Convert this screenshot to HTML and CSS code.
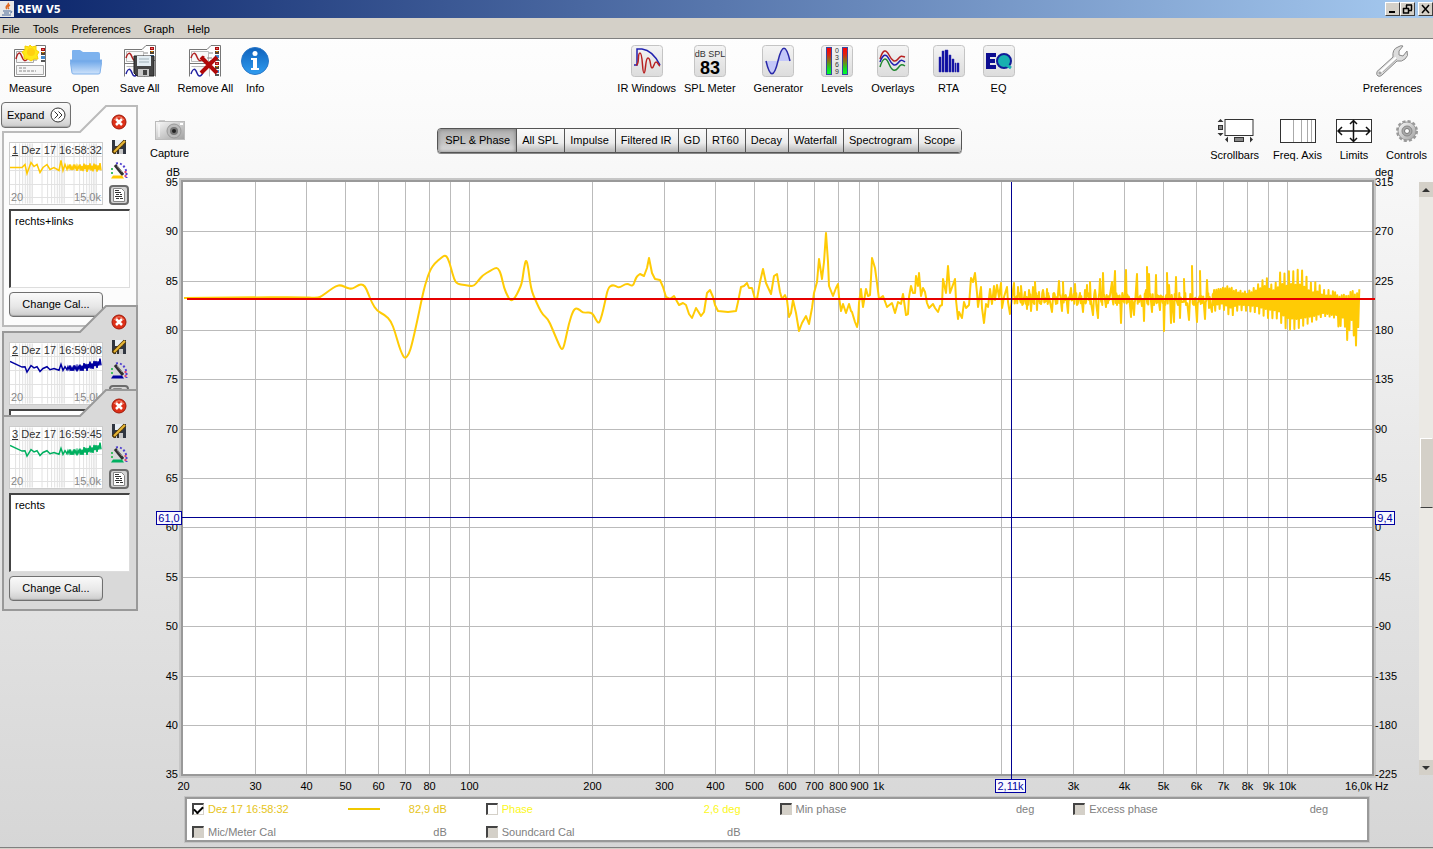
FILE: index.html
```html
<!DOCTYPE html>
<html lang="en">
<head>
	<title>REW V5</title>
	<meta charset="UTF-8">
	<link rel="stylesheet" href="styles.css">
</head>
<body>
	<!-- shared icon shapes -->
	<svg class="defs" width="0" height="0" aria-hidden="true">
		<defs>
			<linearGradient id="tile" x1="0" y1="0" x2="0" y2="1">
				<stop offset="0" stop-color="#f4f4f4"/><stop offset="1" stop-color="#dcdcdc"/>
			</linearGradient>
			<linearGradient id="level" x1="0" y1="0" x2="0" y2="1">
				<stop offset="0" stop-color="#f00"/><stop offset="0.25" stop-color="#e02010"/><stop offset="0.8" stop-color="#10e020"/><stop offset="1" stop-color="#0f3"/>
			</linearGradient>
			<linearGradient id="folder" x1="0" y1="0" x2="0" y2="1">
				<stop offset="0" stop-color="#6aa4e8"/><stop offset="1" stop-color="#cfe3fb"/>
			</linearGradient>
			<linearGradient id="blue" x1="0" y1="0" x2="0" y2="1">
				<stop offset="0" stop-color="#0f62bc"/><stop offset="1" stop-color="#2f9cf0"/>
			</linearGradient>
			<linearGradient id="metal" x1="0" y1="0" x2="1" y2="1">
				<stop offset="0" stop-color="#fafafa"/><stop offset="1" stop-color="#a0a0a0"/>
			</linearGradient>
			<symbol id="i-tile" viewBox="0 0 32 32">
				<rect x="0.5" y="0.5" width="31" height="31" rx="3" fill="url(#tile)" stroke="#c4c4c4"/>
			</symbol>
			<symbol id="i-marks" viewBox="0 0 4 14">
				<rect x="0.5" y="0.5" width="3" height="2" fill="#e66" stroke="#a11"/>
				<rect x="0" y="4" width="4" height="3" fill="#543"/><rect x="1" y="4" width="2" height="1" fill="#d80"/>
				<rect x="0" y="8" width="4" height="3" fill="#48c"/>
				<rect x="0.5" y="12.5" width="3" height="1" fill="#fff" stroke="#555"/>
			</symbol>
			<symbol id="i-stack" viewBox="0 0 32 32">
				<path d="M0.5 31.5V4.5H18L22 0.5H31.5V31.5" fill="#fff" stroke="#777"/>
				<path d="M2.5 6.5H19.5V16.5H2.5zM2.5 21.5H20.5V31.5" fill="#f8f8f8" stroke="#bbb"/>
				<path d="M2 13c2-6 4-6 6-1s4 5 7-1" fill="none" stroke="#b02020" stroke-width="1.5"/>
				<path d="M0.5 18.5H18L22 15.5H31.5" fill="none" stroke="#777"/>
				<path d="M2 29c2-6 4-6 6-1s4 3 6 0" fill="none" stroke="#2020a0" stroke-width="1.5"/>
				<path d="M20 8h4M18 13h5" stroke="#888"/>
				<use href="#i-marks" x="26" y="2" width="4" height="14"/>
				<use href="#i-marks" x="26" y="17" width="4" height="14"/>
			</symbol>
			<symbol id="i-close" viewBox="0 0 16 16">
				<circle cx="8" cy="8" r="7" fill="#dd3018" stroke="#a01808"/>
				<path d="M3 6a5.500 5.500 0 0 1 10 0" fill="none" stroke="#f08870"/>
				<path d="M5 5l6 6M11 5l-6 6" stroke="#fff" stroke-width="2.500"/>
			</symbol>
			<symbol id="i-save" viewBox="0 0 16 16">
				<path d="M1 1h14v14H3l-2-2z" fill="#303640"/>
				<rect x="4" y="1" width="8" height="6" fill="#e8eef4"/>
				<rect x="5" y="10" width="7" height="5" fill="#c8c8c8"/><rect x="6" y="11" width="2" height="4" fill="#333"/>
				<path d="M2 14L14 2" stroke="#5a3c00" stroke-width="3.500"/>
				<path d="M3 13L14 2" stroke="#e8b838" stroke-width="2"/>
			</symbol>
			<symbol id="i-pen" viewBox="0 0 18 18">
				<path d="M6 1.500C11 0 16 5 16.500 11v5" fill="none" stroke="#5040d0" stroke-width="2" stroke-dasharray="2 2"/>
				<path d="M15.500 9v7" stroke="#e04070" stroke-width="2" stroke-dasharray="2 2"/>
				<path d="M2 6v6" stroke="#40c060" stroke-width="2" stroke-dasharray="2 2"/>
				<path d="M5 3l8 10" stroke="#303030" stroke-width="3"/>
				<path d="M7 4l5 6" stroke="#888"/>
				<path d="M1 16.500L3 13.500H12L14 16.500z" fill="currentColor"/>
			</symbol>
			<symbol id="i-note" viewBox="0 0 20 20">
				<rect x="1" y="1" width="18" height="18" rx="3" fill="#d4d4d4" stroke="#6c6c6c" stroke-width="2"/>
				<path d="M4.500 3.500h8l3 3v10h-11z" fill="#fff" stroke="#888"/>
				<path d="M6 5.500h4M6 7.500h6M7 9.500h3M11 9.500h2M6 11.500h7M7 13.500h3M11 13.500h3" fill="none" stroke="#333"/>
			</symbol>
		</defs>
	</svg>

	<header class="titlebar">
		<svg class="java" width="14" height="16" viewBox="0 0 14 16"><rect width="14" height="16" fill="#e8e8e8"/><path d="M8 2c2 2-4 3-1 6M10 4c-2 1-3 2-1 4" fill="none" stroke="#e06820" stroke-width="1.500"/><path d="M3 10h7M4 12h5M2 14h9M10 10c3 0 2 2 0 2" fill="none" stroke="#4a6898"/></svg>
		<h1>REW V5</h1>
		<div class="window-buttons">
			<button aria-label="Minimize"><svg width="11" height="10"><path d="M2 8h6" stroke="#000" stroke-width="2"/></svg></button>
			<button aria-label="Restore"><svg width="11" height="10"><path d="M4 1h6M4.500 1v3M9.500 1v5M7 6.500h3M1 4.500h6M1.500 4v5.500M6.500 4v5.500M1 9h6" fill="none" stroke="#000" stroke-width="1.500"/></svg></button>
			<button class="quit" aria-label="Close"><svg width="11" height="10"><path d="M2 1l7 8M9 1l-7 8" stroke="#000" stroke-width="1.500"/></svg></button>
		</div>
	</header>

	<nav class="menubar">
		<button>File</button>
		<button>Tools</button>
		<button>Preferences</button>
		<button>Graph</button>
		<button>Help</button>
	</nav>

	<div class="toolbar">
		<div class="tool-group">
			<button class="tool">
				<svg width="32" height="32" viewBox="0 0 32 32">
					<path d="M0.500 31.500V4.500H18L22 0.500H31.500V31.500z" fill="#fff" stroke="#777"/>
					<path d="M2.500 6.500H19.500V17.500H2.500zM2.500 20.500H29.500V29.500H2.500z" fill="#f6f6f6" stroke="#aaa"/>
					<path d="M2 14c2-8 4-7 6-2s4 5 7-1" fill="none" stroke="#b02020" stroke-width="1.500"/>
					<path d="M5 23h7M5 26h17M20 15h4" stroke="#888" stroke-dasharray="3 1"/>
					<use href="#i-marks" x="27" y="3" width="4" height="14"/>
					<path d="M16 0l2 2 4-1 0 4 3 2-2 3 1 4-4 0-3 2-3-2-4 0 0-4-2-3 3-2 0-4 4 1z" fill="#ffe818" stroke="#f8d000"/>
					<circle cx="17" cy="7" r="4" fill="#ffd010"/>
				</svg>
				<span>Measure</span>
			</button>
			<button class="tool">
				<svg width="32" height="32" viewBox="0 0 32 32">
					<path d="M2 26V6q0-1 1-1h7l3 2h15q2 0 2 2v16z" fill="#7db2ee"/>
					<path d="M0 15h32l-2 13q0 1-2 1H4q-2 0-2-1z" fill="url(#folder)" stroke="#7fb0ea"/>
				</svg>
				<span>Open</span>
			</button>
			<button class="tool">
				<svg width="32" height="32" viewBox="0 0 32 32">
					<use href="#i-stack" width="32" height="32"/>
					<path d="M10 11h20v20H13l-3-3z" fill="#454545" stroke="#222"/>
					<rect x="13" y="11" width="14" height="10" fill="#e4eef4"/><path d="M15 14h10M15 17h10" stroke="#a0b0b8"/>
					<rect x="14" y="24" width="11" height="7" fill="#c8c8c8"/><rect x="19" y="25" width="4" height="5" fill="#444"/>
				</svg>
				<span>Save All</span>
			</button>
			<button class="tool tight">
				<svg width="32" height="32" viewBox="0 0 32 32">
					<use href="#i-stack" width="32" height="32"/>
					<path d="M12 12l16 16M28 12L12 28" stroke="#b00808" stroke-width="4"/>
				</svg>
				<span>Remove All</span>
			</button>
			<button class="tool">
				<svg width="28" height="32" viewBox="0 0 28 32">
					<circle cx="14" cy="16" r="13.500" fill="url(#blue)" stroke="#2a78c8"/>
					<circle cx="14" cy="8.500" r="2.500" fill="#fff"/>
					<path d="M10 13h6v10h2v2h-8v-2h2v-8h-2z" fill="#fff"/>
				</svg>
				<span>Info</span>
			</button>
		</div>

		<div class="tool-group">
			<button class="tool tight">
				<svg width="32" height="32" viewBox="0 0 32 32">
					<use href="#i-tile" width="32" height="32"/>
					<path d="M3 20h3V4h5c8 1 14 8 18 16" fill="none" stroke="#2020b0" stroke-width="1.500"/>
					<path d="M5 20c4 0 1-12 4-12s2 20 4 20 1-15 4-15 2 10 4 10 2-6 4-6 2 3 4 4" fill="none" stroke="#b82020" stroke-width="1.500"/>
				</svg>
				<span>IR Windows</span>
			</button>
			<button class="tool">
				<svg width="32" height="32" viewBox="0 0 32 32">
					<use href="#i-tile" width="32" height="32"/>
					<text x="16" y="12" class="icon-unit">dB SPL</text>
					<text x="16" y="29" class="icon-level">83</text>
				</svg>
				<span>SPL Meter</span>
			</button>
			<button class="tool">
				<svg width="32" height="32" viewBox="0 0 32 32">
					<use href="#i-tile" width="32" height="32"/>
					<path d="M4 16c4 17 8 17 12 0V16c4-17 8-17 12 0z" fill="#c4c8f8"/>
					<path d="M4 16c4 17 8 17 12 0c4-17 8-17 12 0" fill="none" stroke="#2828a8" stroke-width="1.500"/>
				</svg>
				<span>Generator</span>
			</button>
			<button class="tool">
				<svg width="32" height="32" viewBox="0 0 32 32">
					<use href="#i-tile" width="32" height="32"/>
					<rect x="5.500" y="2.500" width="5" height="27" fill="url(#level)" stroke="#3848a0"/>
					<rect x="21.500" y="2.500" width="5" height="27" fill="url(#level)" stroke="#3848a0"/>
					<text class="icon-digit" x="16" y="8">0</text>
					<text class="icon-digit" x="16" y="15">3</text>
					<text class="icon-digit" x="16" y="22">6</text>
					<text class="icon-digit" x="16" y="29">9</text>
				</svg>
				<span>Levels</span>
			</button>
			<button class="tool">
				<svg width="32" height="32" viewBox="0 0 32 32">
					<use href="#i-tile" width="32" height="32"/>
					<g fill="none" stroke-width="1.500">
						<path d="M3 14c3-10 6-10 9-4s6 8 9 4 4-3 7-2" stroke="#b82020"/>
						<path d="M3 17c3-8 6-9 9-3s6 8 9 4 4-3 7-1" stroke="#2020b0"/>
						<path d="M3 22c3-10 6-10 9-3s6 8 9 4 4-4 7-2" stroke="#208830"/>
					</g>
				</svg>
				<span>Overlays</span>
			</button>
			<button class="tool">
				<svg width="32" height="32" viewBox="0 0 32 32">
					<use href="#i-tile" width="32" height="32"/>
					<path d="M6 12h2v15h-2zM9 6h2v21h-2zM12 5h3v22h-3zM16 10h2v17h-2zM19 14h2v13h-2zM22 18h1v9h-1zM24 18h2v9h-2z" fill="#0c0ca0" stroke="#3030b0" stroke-width="0.500"/>
				</svg>
				<span>RTA</span>
			</button>
			<button class="tool">
				<svg width="32" height="32" viewBox="0 0 32 32">
					<use href="#i-tile" width="32" height="32"/>
					<path d="M3 8h10v4H7v2h5v4H7v2h6v4H3z" fill="#0c0c90"/>
					<circle cx="21" cy="16" r="7" fill="#18b0b0" stroke="#101c98" stroke-width="2"/>
					<path d="M22 19l6 4" stroke="#18b0b0" stroke-width="3"/>
				</svg>
				<span>EQ</span>
			</button>
		</div>

		<div class="tool-group">
			<button class="tool">
				<svg width="32" height="32" viewBox="0 0 32 32">
					<path d="M1 26.500L17 12Q16 4 22 2q3-2 5-1l-4 5 0 4 4 1 4-5q2 5-2 8-3 3-8 2L6 30q-2 2-4 1t-1-4.500z" fill="#dcdcdc" stroke="#888"/>
					<path d="M4 27L20 12.500" stroke="#fff" stroke-width="2"/>
					<path d="M7 27L21 14" stroke="#aaa"/>
					<circle cx="4" cy="28" r="1" fill="#fff" stroke="#888"/>
				</svg>
				<span>Preferences</span>
			</button>
		</div>
	</div>

	<div class="workspace">
		<aside class="sidebar">
			<button class="soft-button expand">Expand
				<svg width="16" height="16" viewBox="0 0 16 16"><circle cx="8" cy="8" r="7" fill="#fff" stroke="#333"/><path d="M4.500 4.500L8 8l-3.500 3.500M8.500 4.500L12 8l-3.500 3.500" fill="none" stroke="#333"/></svg>
			</button>

			<section class="card active">
				<svg class="card-shape" viewBox="0 0 136 222" preserveAspectRatio="none"><path d="M1 221V27H78L104 1H135V221z"/></svg>
				<div class="thumb gold">
					<svg class="thumb-plot" viewBox="0 0 92 60" data-trace="flat"></svg>
					<p class="thumb-name"><u>1</u> Dez 17 16:58:32</p>
					<p class="thumb-range"><span>20</span><span>15,0k</span></p>
				</div>
				<div class="card-tools gold">
					<button aria-label="Remove"><svg width="16" height="16"><use href="#i-close"/></svg></button>
					<button aria-label="Save"><svg width="16" height="16"><use href="#i-save"/></svg></button>
					<button aria-label="Trace colour"><svg width="18" height="18"><use href="#i-pen"/></svg></button>
					<button aria-label="Notes"><svg width="20" height="20"><use href="#i-note"/></svg></button>
				</div>
				<textarea class="notes" aria-label="Notes 1">rechts+links</textarea>
				<button class="soft-button cal">Change Cal...</button>
			</section>

			<section class="card folded">
				<svg class="card-shape" viewBox="0 0 136 222" preserveAspectRatio="none"><path d="M1 221V27H78L104 1H135V221z"/></svg>
				<div class="thumb navy">
					<svg class="thumb-plot" viewBox="0 0 92 60" data-trace="rise"></svg>
					<p class="thumb-name"><u>2</u> Dez 17 16:59:08</p>
					<p class="thumb-range"><span>20</span><span>15,0k</span></p>
				</div>
				<div class="card-tools navy">
					<button aria-label="Remove"><svg width="16" height="16"><use href="#i-close"/></svg></button>
					<button aria-label="Save"><svg width="16" height="16"><use href="#i-save"/></svg></button>
					<button aria-label="Trace colour"><svg width="18" height="18"><use href="#i-pen"/></svg></button>
					<button aria-label="Notes"><svg width="20" height="20"><use href="#i-note"/></svg></button>
				</div>
				<textarea class="notes" aria-label="Notes 2"></textarea>
			</section>

			<section class="card last">
				<svg class="card-shape" viewBox="0 0 136 222" preserveAspectRatio="none"><path d="M1 221V27H78L104 1H135V221z"/></svg>
				<div class="thumb green">
					<svg class="thumb-plot" viewBox="0 0 92 60" data-trace="rise"></svg>
					<p class="thumb-name"><u>3</u> Dez 17 16:59:45</p>
					<p class="thumb-range"><span>20</span><span>15,0k</span></p>
				</div>
				<div class="card-tools green">
					<button aria-label="Remove"><svg width="16" height="16"><use href="#i-close"/></svg></button>
					<button aria-label="Save"><svg width="16" height="16"><use href="#i-save"/></svg></button>
					<button aria-label="Trace colour"><svg width="18" height="18"><use href="#i-pen"/></svg></button>
					<button aria-label="Notes"><svg width="20" height="20"><use href="#i-note"/></svg></button>
				</div>
				<textarea class="notes" aria-label="Notes 3">rechts</textarea>
				<button class="soft-button cal">Change Cal...</button>
			</section>
		</aside>

		<main class="graph">
			<div class="graph-bar">
				<button class="tool capture">
					<svg width="30" height="20" viewBox="0 0 30 20">
						<path d="M4 2V0h6v2" fill="#ccc"/><rect x="0.500" y="1.500" width="29" height="18" fill="url(#metal)" stroke="#bbb"/>
						<path d="M4 4v13" stroke="#fff"/><circle cx="19" cy="11" r="7" fill="#bbb" stroke="#999"/><circle cx="19" cy="11" r="4" fill="#777"/><circle cx="19" cy="11" r="2" fill="#222"/>
						<rect x="25" y="3" width="3" height="2" fill="#fff"/>
					</svg>
					<span>Capture</span>
				</button>

				<div class="tabs">
					<button class="tab selected">SPL &amp; Phase</button>
					<button class="tab">All SPL</button>
					<button class="tab">Impulse</button>
					<button class="tab">Filtered IR</button>
					<button class="tab">GD</button>
					<button class="tab">RT60</button>
					<button class="tab">Decay</button>
					<button class="tab">Waterfall</button>
					<button class="tab">Spectrogram</button>
					<button class="tab">Scope</button>
				</div>

				<div class="view-tools">
					<button class="tool">
						<svg width="38" height="26" viewBox="0 0 38 26">
							<rect x="9" y="1.500" width="28" height="16" fill="#fff" stroke="#333"/>
							<path d="M4.500 1l3 3h-6zM4.500 18l3-3h-6zM9 21.500l3-3v6zM37 21.500l-3-3v6z" fill="#333"/>
							<rect x="2.500" y="7.500" width="4" height="4" fill="#888" stroke="#333"/>
							<rect x="18.500" y="19.500" width="9" height="4" fill="#888" stroke="#333"/>
						</svg>
						<span>Scrollbars</span>
					</button>
					<button class="tool">
						<svg width="36" height="26" viewBox="0 0 36 26">
							<rect x="0.500" y="1.500" width="35" height="23" fill="#fff" stroke="#333"/>
							<path d="M13.500 2v22M21.500 2v22M27.500 2v22M31.500 2v22" stroke="#aaa"/>
						</svg>
						<span>Freq. Axis</span>
					</button>
					<button class="tool">
						<svg width="36" height="26" viewBox="0 0 36 26">
							<rect x="0.500" y="1.500" width="35" height="23" fill="#fff" stroke="#333"/>
							<path d="M2 13h32M17.500 3v20M6 9l-4 4 4 4M30 9l4 4-4 4M14 6l3.500-3.500L21 6M14 20l3.500 3.500L21 20" fill="none" stroke="#111" stroke-width="1.500"/>
						</svg>
						<span>Limits</span>
					</button>
					<button class="tool">
						<svg width="24" height="26" viewBox="0 0 24 26">
							<circle cx="12" cy="13" r="9.500" fill="none" stroke="#999" stroke-width="3" stroke-dasharray="3 2"/>
							<circle cx="12" cy="13" r="9" fill="url(#metal)" stroke="#999"/>
							<circle cx="12" cy="13" r="5" fill="#aaa" stroke="#888"/><circle cx="12" cy="13" r="2.500" fill="#fff" stroke="#777"/>
						</svg>
						<span>Controls</span>
					</button>
				</div>
			</div>

			<div class="plot-row">
				<svg class="plot" id="plot" viewBox="138 166 1281 630" role="img" aria-label="SPL and phase over frequency"></svg>
				<div class="scrollbar">
					<button aria-label="Scroll up"><svg width="8" height="4"><path d="M0 4l4-4 4 4z" fill="#333"/></svg></button>
					<div class="thumb-grip"></div>
					<button aria-label="Scroll down"><svg width="8" height="4"><path d="M0 0l4 4 4-4z" fill="#333"/></svg></button>
				</div>
			</div>

			<div class="legend">
				<div class="legend-item spl">
					<label><input type="checkbox" checked> Dez 17 16:58:32</label>
					<svg width="32" height="2"><rect width="32" height="2" fill="#f0c800"/></svg>
					<span class="value">82,9 dB</span>
				</div>
				<div class="legend-item phase">
					<label><input type="checkbox"> Phase</label>
					<span class="value">2,6 deg</span>
				</div>
				<div class="legend-item">
					<label><input type="checkbox" disabled> Min phase</label>
					<span class="value">deg</span>
				</div>
				<div class="legend-item">
					<label><input type="checkbox" disabled> Excess phase</label>
					<span class="value">deg</span>
				</div>
				<div class="legend-item">
					<label><input type="checkbox" disabled> Mic/Meter Cal</label>
					<span class="value">dB</span>
				</div>
				<div class="legend-item">
					<label><input type="checkbox" disabled> Soundcard Cal</label>
					<span class="value">dB</span>
				</div>
			</div>
		</main>
	</div>

	<footer class="statusbar"></footer>

	<script src="plot.js"></script>
</body>
</html>
```
FILE: styles.css
```css
* {
	box-sizing: border-box;
}

body {
	margin: 0;
	min-height: 100vh;
	display: flex;
	flex-direction: column;
	background: linear-gradient(#ffffff, #fafafa 15%, #e8e8e8 55%, #d6d6d6);
	font-family: "Liberation Sans", Arial, sans-serif;
	font-size: 11px;
	line-height: 13px;
	color: #000;
}

button,
input,
textarea {
	font: inherit;
	color: inherit;
	margin: 0;
}

button {
	padding: 0;
	border: 0;
	background: none;
}

svg {
	display: block;
	flex: none;
}

p {
	margin: 0;
}

.defs {
	position: absolute;
}

/* title and menu */
.titlebar {
	display: flex;
	align-items: center;
	gap: 3px;
	height: 18px;
	background: linear-gradient(to right, #0a246a, #a6caf0);
}

.titlebar h1 {
	margin: 0;
	font-family: "DejaVu Sans", Tahoma, sans-serif;
	font-size: 10px;
	color: #fff;
}

.window-buttons {
	display: flex;
	margin-left: auto;
}

.window-buttons button {
	display: flex;
	align-items: center;
	justify-content: center;
	width: 15px;
	height: 14px;
	background: #d4d0c8;
	border: 1px solid;
	border-color: #fff #404040 #404040 #fff;
}

.window-buttons .quit {
	margin-left: 3px;
}

.menubar {
	display: flex;
	gap: 13px;
	height: 21px;
	padding: 3px 2px 0;
	background: #d4d0c8;
	border-bottom: 1px solid #808080;
}

/* toolbar */
.toolbar {
	display: flex;
	justify-content: space-between;
	padding: 6px 11px 5px 9px;
}

.tool-group {
	display: flex;
	gap: 18px;
}

.tool {
	display: flex;
	flex-direction: column;
	align-items: center;
	gap: 5px;
	white-space: nowrap;
}

.tight {
	margin-right: -10px;
}

.icon-unit {
	font-size: 9px;
	text-anchor: middle;
	fill: #333;
}

.icon-level {
	font-size: 18px;
	font-weight: bold;
	text-anchor: middle;
}

.icon-digit {
	font-size: 7px;
	text-anchor: middle;
	fill: #333;
}

/* measurement list */
.workspace {
	display: flex;
	flex: 1;
}

.sidebar {
	width: 138px;
	flex: none;
	padding: 2px 0 0 1px;
}

.soft-button {
	border: 1px solid #707070;
	border-radius: 4px;
	background: linear-gradient(#fafafa, #e6e6e6 60%, #cccccc);
	box-shadow: inset 0 -1px 1px #aaa;
}

.expand {
	position: relative;
	z-index: 1;
	display: flex;
	align-items: center;
	gap: 6px;
	height: 26px;
	width: 70px;
	padding-left: 5px;
}

.card {
	position: relative;
	display: grid;
	grid-template-columns: 94px 1fr;
	align-content: start;
	gap: 4px 6px;
	width: 136px;
	height: 222px;
	margin: -22px 0 0 1px;
	padding: 8px 6px 0 7px;
}

.card.active {
	margin-top: -23px;
}

.card.folded {
	height: 112px;
	overflow: hidden;
}

.card.last {
	margin-top: -28px;
}

.card > * {
	position: relative;
}

.card > .card-shape {
	position: absolute;
	left: 0;
	top: 0;
	width: 136px;
	height: 222px;
	fill: #d9d9d9;
	stroke: #999;
	stroke-width: 2;
}

.active > .card-shape {
	fill: #fcfcfc;
	stroke: #bbb;
}

.gold {
	color: #ffc800;
}

.navy {
	color: #0000a0;
}

.green {
	color: #00b060;
}

.thumb {
	display: flex;
	flex-direction: column;
	justify-content: space-between;
	align-self: end;
	height: 63px;
	border: 1px solid #ccc;
	background: #fff;
}

.thumb-plot {
	position: absolute;
	inset: 0;
	width: 100%;
	height: 100%;
}

.thumb-name,
.thumb-range {
	position: relative;
	padding: 1px 1px 0 2px;
	color: #333;
	white-space: nowrap;
}

.thumb-range {
	display: flex;
	justify-content: space-between;
	padding: 0 1px;
	color: #888;
}

.card-tools {
	display: flex;
	flex-direction: column;
	align-items: center;
	width: 20px;
	padding-top: 1px;
}

.card-tools button {
	margin-bottom: 7px;
}

.card-tools button:first-child {
	margin-bottom: 9px;
}

.card-tools button:nth-child(3) {
	margin-bottom: 5px;
}

.card-tools button:last-child {
	margin: 0;
}

.notes {
	grid-column: 1 / -1;
	width: 121px;
	height: 79px;
	padding: 4px;
	resize: none;
	border: 1px solid;
	border-color: #444 #ddd #ddd #444;
	border-width: 2px 1px 1px 2px;
	outline: 0;
	overflow: hidden;
	color: #000;
	background: #fff;
}

.cal {
	height: 25px;
}

/* graph */
.graph {
	flex: 1;
	min-width: 0;
	display: flex;
	flex-direction: column;
}

.graph-bar {
	display: flex;
	justify-content: space-between;
	align-items: flex-end;
	height: 66px;
	padding: 0 6px 4px 12px;
}

.capture {
	gap: 7px;
	padding-bottom: 2px;
}

.view-tools {
	display: flex;
	gap: 14px;
}

.tabs {
	display: flex;
	height: 25px;
	margin-bottom: 9px;
	border: 1px solid #555;
	border-radius: 4px;
	overflow: hidden;
	box-shadow: 0 1px 0 #888;
}

.tab {
	padding: 0 6px 0 5px;
	border-left: 1px solid #555;
	background: linear-gradient(#fafafa, #ececec 60%, #b8b8b8);
}

.tab.selected {
	padding-left: 7px;
	border-left: 0;
	background: linear-gradient(#b0b0b0, #c4c4c4 60%, #e0e0e0);
	box-shadow: inset 0 0 4px #777;
}

.plot-row {
	display: flex;
}

.plot {
	flex: 1;
	min-width: 0;
}

.plot text {
	font-size: 11px;
}

.plot .middle {
	text-anchor: middle;
}

.plot .end {
	text-anchor: end;
}

.plot .cursor-text {
	fill: #0000a0;
}

.scrollbar {
	display: flex;
	flex-direction: column;
	justify-content: space-between;
	width: 14px;
	margin: 16px 0 21px;
	background: #ebe9e4;
}

.scrollbar button {
	display: flex;
	align-items: center;
	justify-content: center;
	height: 15px;
	background: #d4d0c8;
}

.thumb-grip {
	height: 70px;
	margin: 0 0 12px 1px;
	background: #d4d0c8;
	border: 1px solid;
	border-color: #fff #d4d0c8 #404040 #fff;
}

.legend {
	display: grid;
	grid-template-columns: repeat(4, 1fr);
	row-gap: 7px;
	margin: 1px 64px 5px 47px;
	padding: 2px 0 0 5px;
	background: #fff;
	border: 2px solid #999;
	outline: 1px solid #c4c4c4;
	color: #808080;
}

.legend-item {
	display: flex;
	align-items: center;
	height: 16px;
}

.legend-item label {
	display: flex;
	align-items: center;
	gap: 4px;
	width: 156px;
}

.legend-item .value {
	margin: 0 39px 0 auto;
}

.legend input {
	appearance: none;
	width: 12px;
	height: 12px;
	border: 1px solid;
	border-color: #444 #d4d0c8 #d4d0c8 #444;
	border-width: 2px 1px 1px 2px;
	background: #fff;
}

.legend input:disabled {
	background: #d4d0c8;
}

.legend input:checked {
	display: flex;
	align-items: center;
	justify-content: center;
}

.legend input:checked::before {
	content: "";
	width: 7px;
	height: 4px;
	margin-bottom: 2px;
	border: solid #000;
	border-width: 0 0 2px 2px;
	transform: rotate(-45deg);
}

.spl {
	color: #e6c419;
}

.phase {
	color: #fbf720;
}

.statusbar {
	height: 2px;
	border-top: 1px solid #808080;
	background: #d4d0c8;
}
```
FILE: plot.js
```js
var SVG = "http://www.w3.org/2000/svg";
var left = 183, right = 1372, top0 = 182, bottom = 775;

function add(parent, tag, attrs, text) {
	var el = document.createElementNS(SVG, tag);
	for (var key in attrs) {
		el.setAttribute(key, attrs[key]);
	}
	if (text !== undefined) {
		el.textContent = text;
	}
	parent.appendChild(el);
	return el;
}

// log frequency axis, 409 units per decade
function freqX(f) {
	return Math.floor(469 + 409 * Math.log10(f / 100)) + 0.5;
}

function splY(db) {
	return Math.round(182 + (95 - db) * 9.87) + 0.5;
}

var curve = [
	184,298, 240,297.5, 300,297, 318,298, 322,296, 330,290, 336,286, 341,285, 347,288, 352,289, 357,286, 361,284, 365,286, 368,293,
	372,303, 377,311, 385,315, 391,321, 395,332, 399,346, 402,354, 405,359, 409,354, 412,344, 417,322, 422,298, 425,285,
	430,270, 435,263, 441,258, 445,255, 448,258, 451,268, 454,279, 457,284, 465,285, 470,286, 474,286, 478,281, 483,275,
	490,271, 495,268, 498,268, 501,274, 504,288, 508,297, 511,301, 515,298, 519,290, 522,283, 524,268, 526,259, 528,266,
	530,282, 532,292, 535,299, 539,308, 543,315, 548,319, 552,328, 557,340, 561,349, 563,349, 565,342, 569,323, 573,311,
	576,308, 580,310, 583,313, 592,312, 596,320, 599,324, 602,315, 605,302, 608,288, 612,285, 616,286, 619,288, 627,283,
	633,287, 636,277, 640,274, 644,276, 647,268, 649,258, 652,273, 655,279, 660,280, 663,287, 666,297, 670,299, 674,296,
	679,305, 683,303, 686,305, 689,314, 692,318, 694,313, 696,308, 701,316, 704,312, 707,293, 710,290, 713,297, 715,305,
	718,311, 728,312, 736,311, 738,302, 741,287, 744,286, 747,283, 749,288, 752,288, 755,299, 757,299, 760,282, 763,269,
	766,283, 771,294, 774,276, 777,274, 780,292, 782,299, 785,295, 787,300, 789,317, 791,313, 793,300, 796,313, 799,331,
	802,323, 806,316, 809,324, 812,308, 814,293, 817,282, 819,259, 822,279, 824,262, 826,233, 828,262, 829,286, 833,296,
	836,288, 838,284, 839,297, 841,311, 843,304, 846,313, 849,304, 851,311, 852,312, 855,322, 857,327, 858,322, 859,303,
	861,289, 863,307, 866,289, 868,296, 870,295, 871,278, 872,258, 875,268, 877,283, 879,299, 883,296, 887,307, 892,303,
	895,313, 898,302, 901,304, 903,294, 906,315, 908,314, 909,297, 911,286, 913,293, 915,293, 916,276, 918,286, 919,273,
	921,296, 923,288, 925,292, 927,303, 929,308, 933,304, 935,308, 938,312, 940,306, 942,305, 943,279, 946,293, 948,266,
	950,293, 955,279, 956,300, 958,319, 959,312, 962,318, 964,302, 966,308, 969,305, 971,278, 973,282, 975,273, 977,293,
	978,307, 981,287, 982,308, 984,323, 986,304, 988,307, 990,289, 992,304, 994,286, 995,300, 997,285, 999,297, 1001,283,
	1002,308, 1004,297, 1007,287, 1008,302, 1010,314, 1012,298, 1014,283, 1016,298, 1018,287, 1020,300, 1021,286, 1023,304,
	1025,292, 1027,309, 1029,290, 1031,311, 1033,287, 1034,300, 1035,282, 1037,310, 1039,292, 1041,304, 1043,290, 1045,302,
	1047,289, 1048,303, 1052,312, 1054,293, 1056,304, 1059,281, 1062,311, 1063,282, 1065,300, 1068,313, 1071,288, 1073,300,
	1075,284, 1077,305, 1080,293, 1083,312, 1085,290, 1087,285, 1089,300, 1090,282, 1093,315, 1095,290, 1098,318, 1100,279,
	1101,300, 1103,273, 1106,307, 1108,303, 1112,282, 1115,271, 1117,305, 1119,303, 1121,323, 1123,298, 1126,270, 1128,302,
	1131,317, 1134,315, 1137,274, 1139,302, 1142,306, 1144,321, 1146,290, 1147,267, 1149,274, 1152,312, 1154,305, 1156,275,
	1158,302, 1160,310, 1162,298, 1164,331, 1166,296, 1167,273, 1169,285, 1171,323, 1174,322, 1176,277, 1178,305, 1180,318,
	1183,302, 1184,279, 1186,305, 1189,320, 1191,296, 1192,266, 1194,305, 1197,322, 1199,298, 1200,271, 1202,303, 1205,319,
	1207,280, 1209,308, 1212,312
];

// upper and lower edge of the dense high-frequency part
var upper = [1212,287, 1222,284, 1228,282, 1237,288, 1247,290, 1255,285, 1260,280, 1266,274, 1271,283, 1276,281, 1281,268,
	1286,273, 1290,268, 1294,270, 1299,268, 1303,270, 1307,277, 1312,284, 1317,281, 1323,290, 1330,290, 1337,293, 1343,295,
	1353,290, 1360,289];
var lower = [1212,312, 1222,308, 1231,317, 1238,310, 1247,311, 1257,313, 1268,319, 1278,320, 1283,328, 1287,333, 1297,333,
	1301,331, 1308,328, 1315,325, 1323,320, 1332,322, 1337,325, 1342,333, 1346,340, 1352,340, 1355,348, 1358,342, 1360,329];

function at(edge, x) {
	for (var i = 2; i < edge.length - 2 && edge[i] < x; i += 2);
	var t = (x - edge[i - 2]) / (edge[i] - edge[i - 2]);
	return edge[i - 1] + t * (edge[i + 1] - edge[i - 1]);
}

function tracePath() {
	var d = "M" + curve[0] + " " + curve[1];
	// smooth through midpoints while the trace is slow, straight after that
	for (var i = 2; i < curve.length; i += 2) {
		var x = curve[i], y = curve[i + 1];
		if (x < 640) {
			d += "Q" + x + " " + y + " " + (x + curve[i + 2]) / 2 + " " + (y + curve[i + 3]) / 2;
		} else {
			d += "L" + x + " " + y;
		}
		// ripple between the peaks
		if (x > 1012) {
			d += "L" + (x + 0.7) + " " + (299 + 5 * Math.sin(x * 2.3)).toFixed(1);
			d += "L" + (x + 1.3) + " " + (299 - 6 * Math.sin(x * 1.1)).toFixed(1);
		}
	}
	var n = 0;
	for (x = 1213; x <= 1360; x += 1.1) {
		var k = 0.45 + 0.55 * Math.pow(Math.sin(x * 0.72), 2);
		if (x > 1335) {
			k = 0.75 + 0.25 * Math.sin(x * 2.1);
		}
		var edge = at(n % 2 ? upper : lower, x);
		d += "L" + x.toFixed(1) + " " + (300 + (edge - 300) * k).toFixed(1);
		n++;
	}
	return d;
}

function drawPlot() {
	var svg = document.getElementById("plot");
	add(svg, "rect", { x: 181, y: 180, width: 1193, height: 596, fill: "none", stroke: "#c6c6c6", "stroke-width": 4 });
	add(svg, "rect", { x: 182, y: 181, width: 1191, height: 594, fill: "#fff", stroke: "#999", "stroke-width": 2 });

	var grid = "";
	for (var decade = 10; decade <= 10000; decade *= 10) {
		for (var m = 1; m < 10; m++) {
			var f = decade * m;
			if (f > 20 && f <= 10000) {
				grid += "M" + freqX(f) + " " + top0 + "V" + (bottom - 1);
			}
			if (f >= 20 && f <= 10000 && f != 90 && f != 2000) {
				add(svg, "text", { x: freqX(f), y: 790, "class": "middle" }, f >= 1000 ? f / 1000 + "k" : f);
			}
		}
	}
	for (var db = 95; db >= 35; db -= 5) {
		if (db < 95 && db > 35) {
			grid += "M" + left + " " + splY(db) + "H" + right;
		}
		add(svg, "text", { x: 178, y: splY(db) + 3.5, "class": "end" }, db);
		add(svg, "text", { x: 1375, y: splY(db) + 3.5 }, 315 - (95 - db) * 9);
	}
	add(svg, "path", { d: grid, stroke: "#bbb", fill: "none" });
	add(svg, "text", { x: 180, y: 176, "class": "end" }, "dB");
	add(svg, "text", { x: 1375, y: 176 }, "deg");
	add(svg, "text", { x: 1372, y: 790, "class": "end" }, "16,0k");
	add(svg, "text", { x: 1375, y: 790 }, "Hz");

	add(svg, "path", { d: tracePath(), fill: "none", stroke: "#ffcb05", "stroke-width": 2, "stroke-linejoin": "round" });
	add(svg, "path", { d: "M187 299H1375", stroke: "#e60000", "stroke-width": 2 });

	// cursor
	add(svg, "path", { d: "M182 517.5H1375M1011.5 182V779", stroke: "#000090", fill: "none" });
	var boxes = [[156, 511, 25, "61,0"], [1375, 511, 19, "9,4"], [995, 779, 30, "2,11k"]];
	boxes.forEach(function (b) {
		add(svg, "rect", { x: b[0] + 0.5, y: b[1] + 0.5, width: b[2], height: 13, fill: "#f8f8ff", stroke: "#0000a0" });
		add(svg, "text", { x: b[0] + b[2] / 2 + 0.5, y: b[1] + 11, "class": "middle cursor-text" }, b[3]);
	});
}

function drawThumb(svg) {
	var grid = "";
	for (var decade = 10; decade <= 10000; decade *= 10) {
		for (var m = 1; m < 10; m++) {
			var x = Math.log10(decade * m / 20) * 32;
			if (x > 0 && x < 92) {
				grid += "M" + x.toFixed(1) + " 0V60";
			}
		}
	}
	add(svg, "path", { d: grid + "M0 13H92M0 27H92M0 41H92M0 54H92", stroke: "#e2e2e2", fill: "none" });
	var rise = svg.getAttribute("data-trace") == "rise";
	var bumps = [0,0, 12,0, 15,-3, 17,6, 21,-5, 24,-1, 27,-3, 30,5, 33,0, 37,-3, 40,2, 44,0, 49,3, 51,-7, 53,3, 55,-3, 57,2];
	var d = "";
	for (var i = 0; i < bumps.length; i += 2) {
		var base = rise ? 18 + 7 * Math.min(1, bumps[i] / 15) : 24;
		d += (i ? "L" : "M") + bumps[i] + " " + (base + bumps[i + 1] * (rise ? 0.6 : 1));
	}
	for (var k = 58; k < 92; k++) {
		var mid = rise ? 25 - (k - 58) * (k - 58) / 180 : 24;
		var amp = (k > 70 ? 3 : 2) + 1.3 * Math.sin(k * 1.9);
		d += "L" + k + " " + (mid + (k % 2 ? amp : -amp)).toFixed(1);
	}
	add(svg, "path", { d: d, fill: "none", stroke: "currentColor", "stroke-width": 1.5 });
}

drawPlot();
document.querySelectorAll(".thumb-plot").forEach(drawThumb);
```
